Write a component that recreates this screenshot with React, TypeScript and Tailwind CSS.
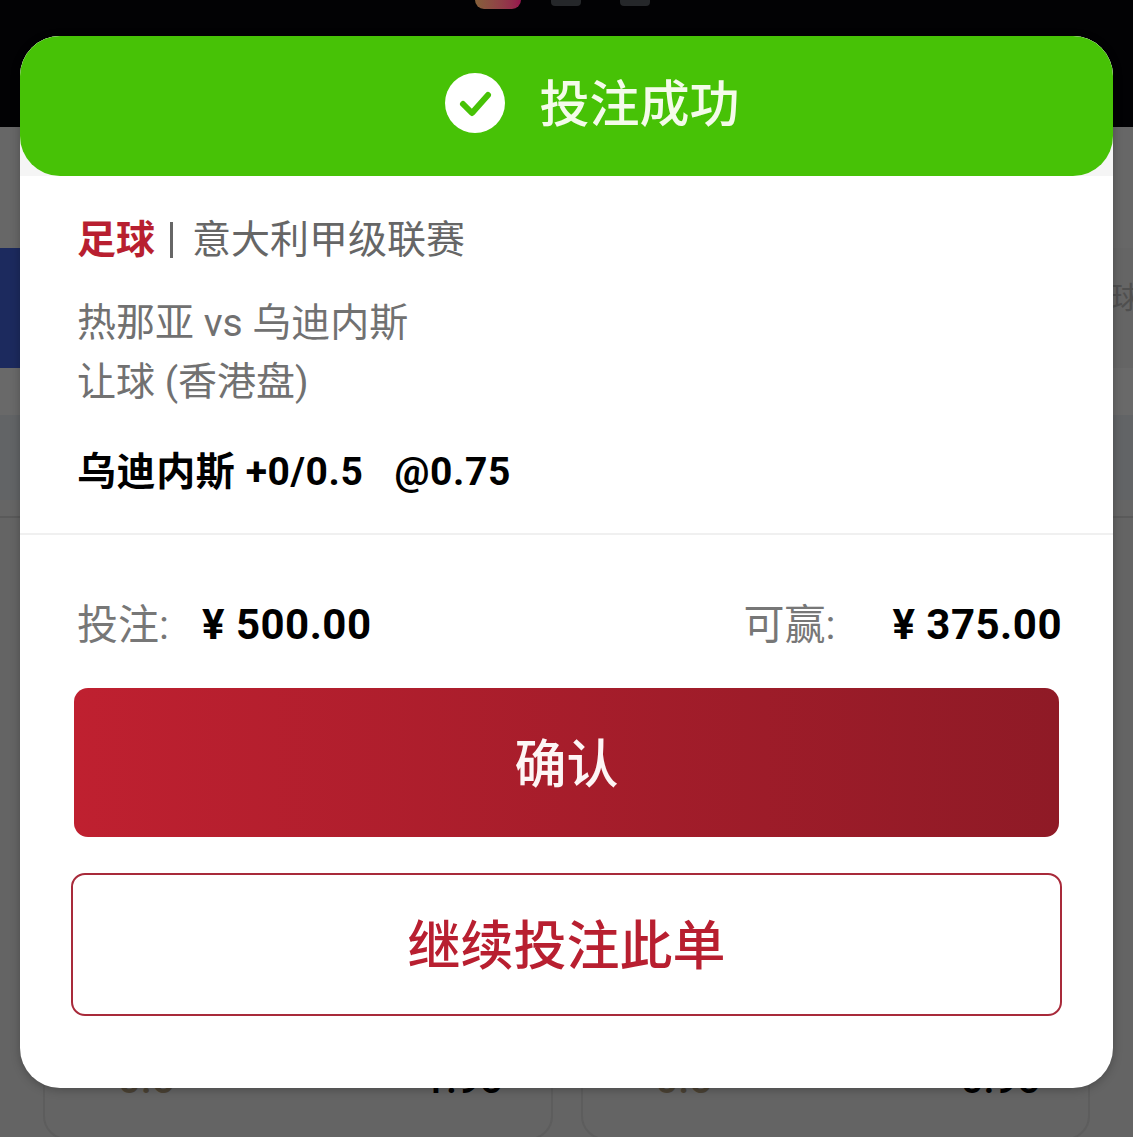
const cjk = 'font-["Roboto","Noto_Sans_CJK_SC",sans-serif]';

function Backdrop() {
  return (
    <div className="flex h-[1137px] flex-col bg-[#646464]">
      <div className="h-[127px] shrink-0 bg-[#020204]">
        <div className="flex pl-[475px]">
          <div className="h-[9px] w-[46px] rounded-b-[10px] bg-gradient-to-r from-[#85603a] to-[#96144e]" />
          <div className="ml-[30px] h-[6px] w-[30px] rounded-b-[4px] bg-[#25272a]" />
          <div className="ml-[39px] h-[6px] w-[30px] rounded-b-[4px] bg-[#25272a]" />
        </div>
      </div>
      <div className="h-[121px] shrink-0 bg-[#676767]" />
      <div className="flex h-[120px] shrink-0 items-center justify-between bg-[#656565] pb-[20px]">
        <div className="-mb-[20px] h-[120px] w-[20px] bg-[#1c2a5e]" />
        <span className="-mr-[8px] text-[30px] leading-none text-[#4f4f4f]">主球</span>
      </div>
      <div className="h-[47px] shrink-0 bg-[#696969]" />
      <div className="h-[85px] shrink-0 bg-[#626466]" />
      <div className="h-[18px] shrink-0 border-b-2 border-[#5a5a5a] bg-[#656565]" />
      <div className="flex flex-1 gap-[28px] pl-[43px] pr-[43px] pt-[522px]">
        <PriceCard label="0.5" price="1.95" />
        <PriceCard label="0.5" price="0.95" />
      </div>
    </div>
  );
}

function PriceCard({ label, price }: { label: string; price: string }) {
  return (
    <div className="flex h-[100px] flex-1 items-start justify-between rounded-[24px] border-2 border-[#5d5d5d] pl-[73px] pr-[48px] pt-[18px] text-[40px] font-medium leading-none">
      <span className="text-[#4a4234]">{label}</span>
      <span className="text-black">{price}</span>
    </div>
  );
}

export default function App() {
  return (
    <div className={`relative h-[1137px] w-[1133px] overflow-hidden ${cjk}`}>
      <Backdrop />
      {/* bet result modal */}
      <div className="absolute left-[20px] top-[36px] flex h-[1052px] w-[1093px] flex-col rounded-[40px] bg-white shadow-[0_2px_10px_rgba(0,0,0,0.25)]">
        <div className="rounded-t-[40px] bg-[#f5f5f5]">
          <div className="flex h-[140px] shrink-0 items-center justify-center gap-[35px] rounded-[40px] bg-[#47c206] pl-[51px]">
            <svg width="60" height="60" viewBox="0 0 60 60" className="mb-[6px] shrink-0">
              <circle cx="30" cy="30" r="30" fill="white" />
              <path d="M18 31 L27 40 L43 22" fill="none" stroke="#47c206" strokeWidth="6" strokeLinecap="round" strokeLinejoin="round" />
            </svg>
            <span className="mb-[2px] text-[50px] font-medium leading-none text-[#f4fbea]">投注成功</span>
          </div>
        </div>

        <div className="flex h-[359px] shrink-0 flex-col border-b-2 border-[#f0f0f0] pl-[57px] pt-[39px]">
          <div className="flex items-center text-[39px] leading-[50px] text-[#666666]">
            <span className="font-bold text-[#b81f30]">足球</span>
            <span className="ml-[15px] mr-[19px] h-[36px] w-[3px] bg-[#666666]" />
            <span>意大利甲级联赛</span>
          </div>
          <div className="mt-[29px] text-[39px] leading-[59px] text-[#717171]">
            <div>热那亚 vs 乌迪内斯</div>
            <div>让球 (香港盘)</div>
          </div>
          <div className="mt-[35px] flex text-[39px] font-bold leading-[50px] tracking-[0.6px] text-black">
            <span>乌迪内斯 +0/0.5</span>
            <span className="ml-[31px]">@0.75</span>
          </div>
        </div>

        <div className="flex items-center justify-between pl-[57px] pr-[51px] pt-[63px]">
          <div className="flex items-center">
            <span className="text-[41px] leading-[54px] text-[#777777]">投注:</span>
            <span className="ml-[33px] text-[42px] font-bold leading-[54px] tracking-[0.5px] text-black">¥ 500.00</span>
          </div>
          <div className="flex items-center">
            <span className="text-[41px] leading-[54px] text-[#777777]">可赢:</span>
            <span className="ml-[57px] text-[42px] font-bold leading-[54px] tracking-[0.5px] text-black">¥ 375.00</span>
          </div>
        </div>

        <div className="mt-[36px] flex flex-col px-[51px]">
          <button className="mx-[3px] flex h-[149px] items-center justify-center rounded-[14px] bg-gradient-to-r from-[#bf2030] to-[#8f1a26] pt-[6px] text-[52px] font-medium text-[#fdf5f5]">
            确认
          </button>
          <button className="mt-[36px] flex h-[143px] items-center justify-center rounded-[14px] border-2 border-[#a82a3a] bg-white pt-[6px] text-[53px] font-medium text-[#b81f30]">
            继续投注此单
          </button>
        </div>
      </div>
    </div>
  );
}
